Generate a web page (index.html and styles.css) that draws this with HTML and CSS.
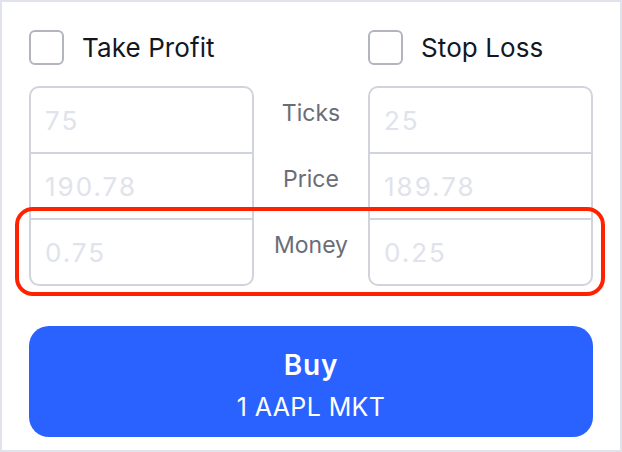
FILE: index.html
```html
<!DOCTYPE html>
<html>
<head>
<meta charset="utf-8">
<link rel="stylesheet" href="styles.css">
</head>
<body>
<div class="panel">
  <div class="row head">
    <label class="check"><span class="box"></span><span class="check-text">Take Profit</span></label>
    <span></span>
    <label class="check"><span class="box"></span><span class="check-text">Stop Loss</span></label>
  </div>
  <div class="fields">
    <div class="row field first">
      <input class="cell" placeholder="75">
      <span class="label">Ticks</span>
      <input class="cell" placeholder="25">
    </div>
    <div class="row field">
      <input class="cell" placeholder="190.78">
      <span class="label">Price</span>
      <input class="cell" placeholder="189.78">
    </div>
    <div class="row field last highlight">
      <input class="cell" placeholder="0.75">
      <span class="label">Money</span>
      <input class="cell" placeholder="0.25">
      <span class="ring"></span>
    </div>
  </div>
  <button class="buy">
    <span class="buy-title">Buy</span>
    <span class="buy-sub">1 AAPL MKT</span>
  </button>
</div>
</body>
</html>
```

FILE: styles.css
```css
* { box-sizing: border-box; }
html, body { margin: 0; padding: 0; background: #fff; }
body { font-family: Inter, "Noto Sans", sans-serif; }

.panel {
  width: 622px;
  height: 452px;
  border: 2px solid #e0e3eb;
  padding: 28px 27px 0 27px;
}

.row {
  display: grid;
  grid-template-columns: 225px 1fr 225px;
}

.head { height: 35px; align-items: center; }

.check { display: flex; align-items: center; gap: 18px; }
.box {
  width: 35px; height: 35px;
  border: 2px solid #b2b5be;
  border-radius: 6px;
}
.check-text { font-size: 26px; color: #131722; letter-spacing: 0.1px; }

.fields { margin-top: 21px; }

.field { height: 68px; margin-top: -2px; position: relative; }
.field.first { margin-top: 0; }

.cell {
  height: 68px;
  border: 2px solid #d1d4dc;
  padding: 0 0 0 14px;
  font-family: Inter, "Noto Sans", sans-serif;
  font-size: 26px;
  letter-spacing: 2px;
  color: #131722;
  background: transparent;
  outline: none;
  min-width: 0;
  width: 100%;
}
.cell::placeholder { color: #e0e3eb; }
.first .cell { border-radius: 10px 10px 0 0; }
.last .cell { border-radius: 0 0 10px 10px; }

.label {
  display: flex;
  justify-content: center;
  align-items: center;
  padding-bottom: 15px;
  font-size: 23px;
  color: #6a6d78;
}

.ring {
  position: absolute;
  left: -14px; right: -12px;
  top: -11px; bottom: -10px;
  border: 4px solid #ff2200;
  border-radius: 18px;
  pointer-events: none;
}

.buy {
  display: flex;
  flex-direction: column;
  align-items: center;
  justify-content: center;
  gap: 10px;
  width: 100%;
  height: 111px;
  margin-top: 40px;
  border: none;
  border-radius: 20px;
  background: #2962ff;
  color: #fff;
  font-family: Inter, "Noto Sans", sans-serif;
  padding: 6px 0 0 0;
}
.buy-title { font-size: 28px; font-weight: 600; line-height: 34px; letter-spacing: 0.8px; }
.buy-sub { font-size: 25px; line-height: 30px; letter-spacing: 0.4px; }
```
